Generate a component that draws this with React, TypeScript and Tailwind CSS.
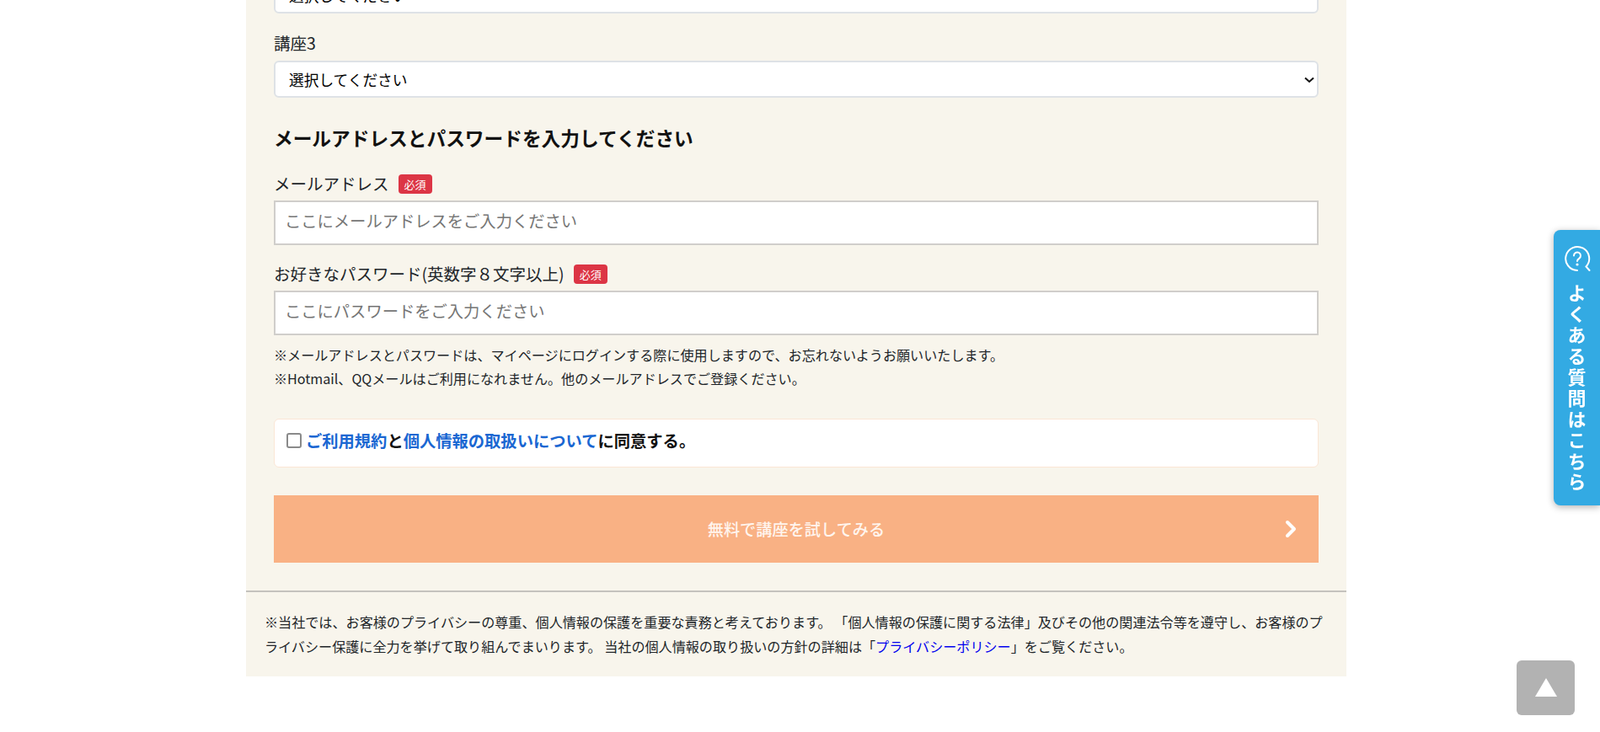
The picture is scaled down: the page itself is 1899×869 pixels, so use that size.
import React from "react";

const font = { fontFamily: '"Noto Sans CJK JP", "Noto Sans", sans-serif' };

function Badge() {
  return (
    <span className="ml-[11px] inline-flex h-[23px] w-[40px] items-center justify-center rounded-[4px] bg-[#dc3545] text-[13px] leading-none text-white">
      必須
    </span>
  );
}

function Course({ label }: { label?: string }) {
  return (
    <div className="mb-[22px]">
      {label && <label className="mb-[9px] block h-[25px] text-[19.5px] leading-[25px] text-[#212529]">{label}</label>}
      <div className="relative">
        <select className="block h-[44px] w-full appearance-none rounded-[6px] border-2 border-[#dee2e6] bg-white pl-[16px] text-[17.7px] text-black">
          <option>選択してください</option>
        </select>
        <svg className="absolute top-[19px] right-[5px]" width="12" height="8" viewBox="0 0 12 8" fill="none" stroke="#111" strokeWidth="2">
          <path d="M1 1.5l5 4.5 5-4.5" />
        </svg>
      </div>
    </div>
  );
}

function Field({ label, placeholder, type, gap }: { label: string; placeholder: string; type: string; gap: string }) {
  return (
    <div className={gap}>
      <label className="mb-[8px] flex h-[24px] items-center text-[19.5px] leading-[24px] text-[#212529]">
        {label}
        <Badge />
      </label>
      <input
        type={type}
        placeholder={placeholder}
        className="block h-[53px] w-full border-2 border-[#d0cecb] bg-white px-[11px] pb-[5px] text-[19.3px] text-black placeholder:text-[#757575]"
      />
    </div>
  );
}

export default function App() {
  return (
    <div style={font} className="h-[869px] w-full overflow-hidden bg-white">
      <div className="w-[1890px]">
        <main className="mx-auto mt-[-28px] w-[1306px] bg-[#f8f5ec] pb-[21px]">
          <form className="px-[33px] pb-[33px]">
            <Course />
            <Course label="講座3" />
            <h2 className="mt-[34px] mb-[28px] text-[22.7px] leading-[28px] font-bold text-[#111]">
              メールアドレスとパスワードを入力してください
            </h2>
            <Field label="メールアドレス" placeholder="ここにメールアドレスをご入力ください" type="email" gap="mb-[22px]" />
            <Field label="お好きなパスワード(英数字８文字以上)" placeholder="ここにパスワードをご入力ください" type="password" gap="mb-[10px]" />
            <p className="mt-[-1px] text-[16.1px] leading-[28px] text-[#212529]">
              ※メールアドレスとパスワードは、マイページにログインする際に使用しますので、お忘れないようお願いいたします。
              <br />
              ※Hotmail、QQメールはご利用になれません。他のメールアドレスでご登録ください。
            </p>
            <div className="mt-[34px] flex h-[58px] items-start gap-[5px] rounded-[6px] border border-[#fbe6d5] bg-white pr-[15px] pl-[14px] pt-[13px]">
              <input type="checkbox" className="mt-[3px] h-[18px] w-[18px] shrink-0 appearance-none rounded-[3px] border-2 border-[#8a8a8a] bg-white" />
              <label className="text-[19.3px] leading-[25px] font-bold text-[#111]">
                <a className="text-[#1a67d2]">ご利用規約</a>と<a className="text-[#1a67d2]">個人情報の取扱いについて</a>に同意する。
              </label>
            </div>
            <button type="button" className="mt-[33px] flex h-[80px] w-full items-center bg-[#f9b184] pr-[26px] pl-[40px] text-[19.2px] font-medium text-[#fff5ee]">
              <span className="flex-1 text-center">無料で講座を試してみる</span>
              <svg width="14" height="22" viewBox="0 0 14 22" fill="none" stroke="white" strokeWidth="4" strokeLinecap="round" strokeLinejoin="round">
                <path d="M3 3l8 8-8 8" />
              </svg>
            </button>
          </form>
          <hr className="border-t-[2px] border-[#c4c2bd]" />
          <p className="pr-[20px] pl-[22px] pt-[21px] text-[16.1px] leading-[29px] text-[#212529]">
            ※当社では、お客様のプライバシーの尊重、個人情報の保護を重要な責務と考えております。 「個人情報の保護に関する法律」及びその他の関連法令等を遵守し、お客様のプライバシー保護に全力を挙げて取り組んでまいります。 当社の個人情報の取り扱いの方針の詳細は「<a className="text-[#0000ee]">プライバシーポリシー</a>」をご覧ください。
          </p>
        </main>
      </div>

      <a className="fixed top-[273px] right-0 flex h-[327px] w-[55px] flex-col items-center rounded-l-[8px] bg-[#33aae3] pt-[18px] shadow-[0_2px_8px_rgba(0,0,0,0.3)]">
        <svg width="32" height="32" viewBox="0 0 32 32" fill="none" stroke="white" strokeWidth="2" strokeLinecap="round">
          <path d="M16 30A14 14 0 1 1 26.5 25.5L30.5 30" />
          <path d="M12 12.5a4 4 0 1 1 6.2 3.3c-1.4.9-2.2 1.6-2.2 3.2" />
          <circle cx="16" cy="23" r="0.6" fill="white" />
        </svg>
        <span className="mt-[14px] text-[22px] leading-[24px] font-bold tracking-[2.9px] text-white [writing-mode:vertical-rl]">よくある質問はこちら</span>
      </a>
      <a className="fixed top-[784px] left-[1800px] flex h-[65px] w-[69px] items-center justify-center rounded-[6px] bg-[#b2b2b2]">
        <svg width="26" height="23" viewBox="0 0 26 23"><path d="M13 0L26 22H0z" fill="white" /></svg>
      </a>
    </div>
  );
}
